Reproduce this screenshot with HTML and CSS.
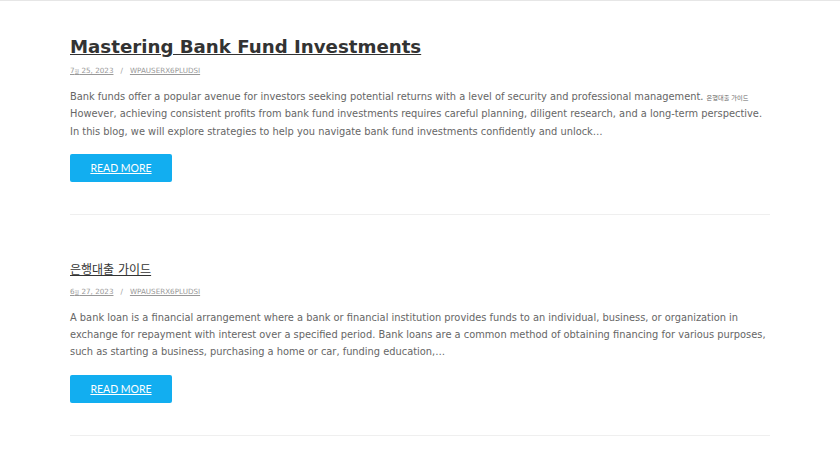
FILE: index.html
```html
<!DOCTYPE html>
<html>
<head>
<meta charset="utf-8">
<link rel="stylesheet" href="styles.css">
</head>
<body>
<div class="page">
  <main class="posts">
    <article class="post">
      <h2 class="post-title"><a href="#">Mastering Bank Fund Investments</a></h2>
      <div class="meta"><a href="#">7<span class="ko">월</span> 25, 2023</a><span class="sep">/</span><a href="#">wpauserx6pludsi</a></div>
      <p class="excerpt">Bank funds offer a popular avenue for investors seeking potential returns with a level of security and professional management. <span class="ko">은행대출 가이드</span> However, achieving consistent profits from bank fund investments requires careful planning, diligent research, and a long-term perspective. In this blog, we will explore strategies to help you navigate bank fund investments confidently and unlock…</p>
      <a class="btn" href="#">READ MORE</a>
    </article>
    <article class="post">
      <h2 class="post-title"><a href="#"><span class="ko">은행대출 가이드</span></a></h2>
      <div class="meta"><a href="#">6<span class="ko">월</span> 27, 2023</a><span class="sep">/</span><a href="#">wpauserx6pludsi</a></div>
      <p class="excerpt">A bank loan is a financial arrangement where a bank or financial institution provides funds to an individual, business, or organization in exchange for repayment with interest over a specified period. Bank loans are a common method of obtaining financing for various purposes, such as starting a business, purchasing a home or car, funding education,…</p>
      <a class="btn" href="#">READ MORE</a>
    </article>
  </main>
</div>
</body>
</html>
```

FILE: styles.css
```css
html, body {
  margin: 0;
  padding: 0;
  background: #fff;
}
body {
  font-family: "DejaVu Sans", "Noto Sans CJK KR", sans-serif;
  border-top: 1px solid #e6e6e6;
}
.page {
  padding: 0 70px;
}
.posts {
  width: 700px;
}
.post {
  padding: 34px 0 32px;
  border-bottom: 1px solid #efefef;
}
.post + .post {
  padding-top: 41px;
}
.ko {
  line-height: 0;
}
.post-title {
  margin: 0;
  font-size: 18.2px;
  line-height: 24px;
  font-weight: bold;
}
.post-title a {
  color: #333;
  text-decoration: underline;
}
.post-title .ko {
  font-size: 12px;
  font-weight: normal;
}
.meta {
  margin-top: 6px;
  font-size: 7.2px;
  line-height: 12px;
  text-transform: uppercase;
  color: #999;
}
.meta a {
  color: #999;
  text-decoration: underline;
}
.meta .ko {
  font-size: 5px;
}
.sep {
  margin: 0 7px;
}
.excerpt {
  margin: 11px 0 0;
  font-size: 9.85px;
  line-height: 17.3px;
  color: #666;
}
.excerpt .ko {
  font-size: 6.2px;
}
.btn {
  display: flex;
  align-items: center;
  justify-content: center;
  margin-top: 14px;
  width: 102px;
  height: 28px;
  background: #12aef0;
  border-radius: 2px;
  color: #fff;
  font-family: Lato, "DejaVu Sans", sans-serif;
  font-size: 10.5px;
  text-decoration: underline;
}
```
